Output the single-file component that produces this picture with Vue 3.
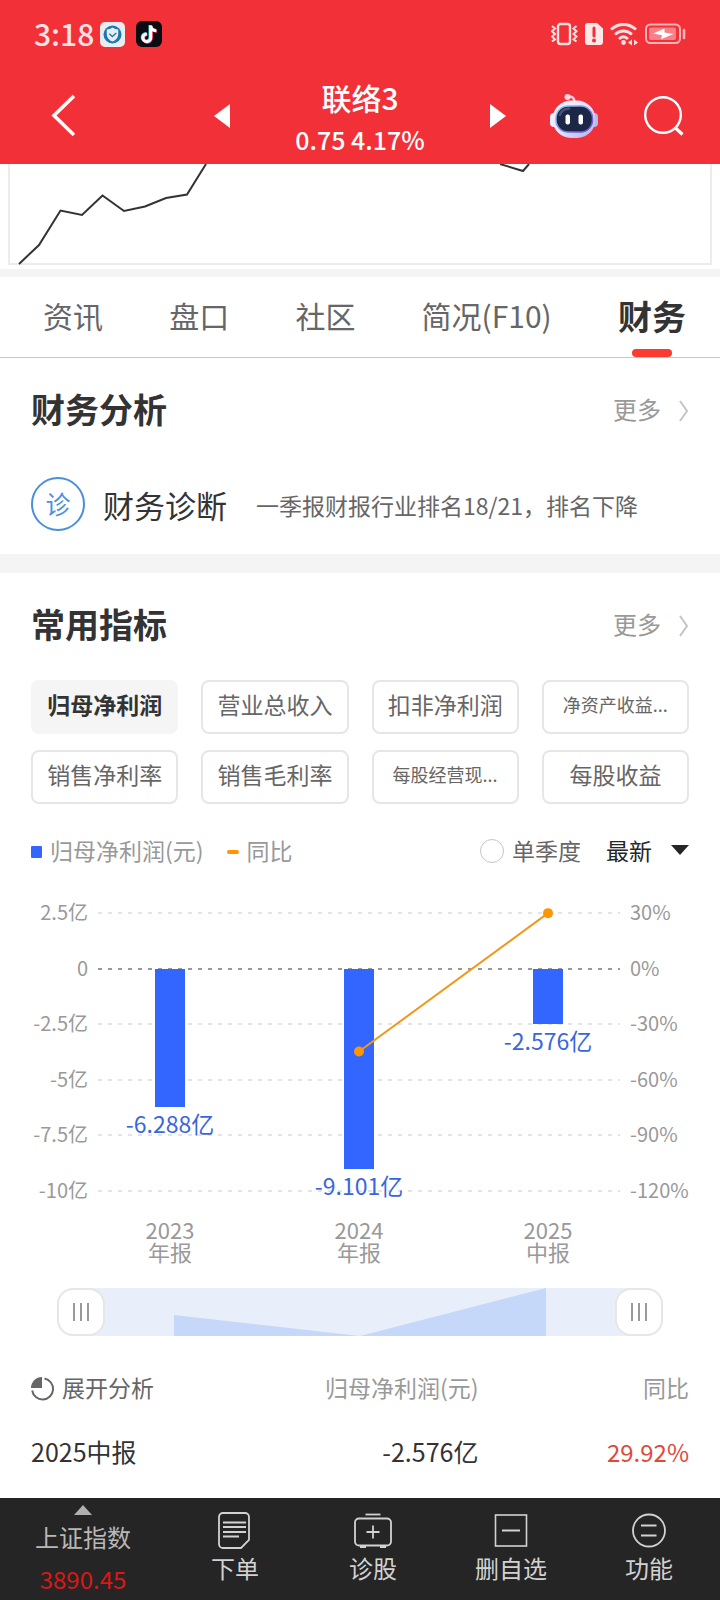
<template>
  <div class="page">
    <header class="header">
      <div class="status">
        <span class="clock">3:18</span>
        <svg class="app-icon" width="25" height="25" viewBox="0 0 25 25">
          <rect width="25" height="25" rx="5" fill="#e9edf0" />
          <circle cx="12.5" cy="12.5" r="9" fill="#1b78b4" />
          <path d="M12.500 5.500c1.800 1.300 3.500 1.900 5.700 2v4.500c0 3.800-2.400 6.300-5.700 7.600-3.300-1.300-5.700-3.800-5.700-7.600V7.500c2.200-.1 3.900-.7 5.700-2z" fill="#e9edf0" />
          <path d="M9.300 11.800l3 2.800 4-3.600" fill="none" stroke="#1b78b4" stroke-width="1.3" />
        </svg>
        <svg class="app-icon app-icon--tok" width="26" height="26" viewBox="0 0 26 26">
          <rect width="26" height="26" rx="6" fill="#0b0b14" />
          <g fill="none" stroke-width="3">
            <path d="M14 4v12.300a3.900 3.900 0 1 1-3.900-3.900M14 4.500c.4 2.900 2.500 4.600 5.600 4.800" stroke="#35e0e0" />
            <path d="M15.400 5v12.300a3.900 3.900 0 1 1-3.900-3.900M15.400 5.500c.4 2.900 2.500 4.600 5.600 4.800" stroke="#f2375f" />
            <path d="M14.700 4.500v12.300a3.900 3.900 0 1 1-3.900-3.900M14.700 5c.4 2.900 2.500 4.600 5.600 4.800" stroke="#fff" />
          </g>
        </svg>
        <div class="status-right">
          <svg width="27" height="24" viewBox="0 0 27 24" fill="none" stroke="#ffdfe0">
            <rect x="7" y="2" width="12" height="20" rx="2.5" stroke-width="2.4" />
            <path d="M1 4l3 2.500-3 2.700 3 2.700-3 2.700 3 2.700-3 2.200M25.500 4l-3 2.500 3 2.700-3 2.700 3 2.700-3 2.700 3 2.200" stroke-width="2" />
          </svg>
          <svg width="18" height="24" viewBox="0 0 18 24">
            <path d="M3 1h9l6 5.500V20a3 3 0 0 1-3 3H3a3 3 0 0 1-3-3V4a3 3 0 0 1 3-3z" fill="#ffe6e7" />
            <path d="M9 6v8" stroke="#f03038" stroke-width="3" stroke-linecap="round" />
            <circle cx="9" cy="18.500" r="2" fill="#f03038" />
          </svg>
          <svg width="28" height="24" viewBox="0 0 28 24" fill="none" stroke="#ffdfe0" stroke-width="2.800">
            <path d="M1 7.500C8.500.8 18.500.8 26 7.500M5 12.500c5-4.700 12-4.700 17 0M9 17c2.800-2.800 6-2.800 9 0" />
            <circle cx="13.500" cy="20.500" r="2.400" fill="#ffdfe0" stroke="none" />
            <path d="M22 17.500v6l-4-3zM24 17.500v6l4-3z" fill="#ffdfe0" stroke="none" />
          </svg>
          <svg width="41" height="22" viewBox="0 0 41 22">
            <rect x="1" y="1.500" width="34" height="18.500" rx="4.500" fill="none" stroke="#ffb3b6" stroke-width="2" />
            <rect x="4" y="4.500" width="27" height="12.500" rx="2" fill="#f98086" />
            <path d="M19.500 5.500L8 10.500l9 1.800-1 4L28.500 11l-9-1.500z" fill="#fff" />
            <path d="M39 7v8" stroke="#ffb3b6" stroke-width="2.600" stroke-linecap="round" />
          </svg>
        </div>
      </div>

      <div class="nav">
        <button class="icon-btn nav-back" aria-label="返回">
          <svg width="26" height="44" viewBox="0 0 26 44" fill="none" stroke="#fff" stroke-width="3.600">
            <path d="M23 2L3 21.500l20 19.500" />
          </svg>
        </button>
        <div class="nav-stock">
          <button class="icon-btn" aria-label="上一只">
            <svg width="16" height="24" viewBox="0 0 16 24"><path d="M16 0v24L0 12z" fill="#fff" /></svg>
          </button>
          <h1 class="stock">
            <span class="stock-name">联络3</span>
            <span class="stock-quote">0.75 4.17%</span>
          </h1>
          <button class="icon-btn" aria-label="下一只">
            <svg width="16" height="24" viewBox="0 0 16 24"><path d="M0 0v24l16-12z" fill="#fff" /></svg>
          </button>
        </div>
        <div class="nav-actions">
          <button class="icon-btn" aria-label="智能助手">
            <svg width="48" height="46" viewBox="0 0 48 46">
              <defs>
                <linearGradient id="robotShell" x1="0" y1="0" x2="1" y2="1">
                  <stop offset="0" stop-color="#fff0f8" />
                  <stop offset=".5" stop-color="#e7e2fb" />
                  <stop offset="1" stop-color="#aeb0f0" />
                </linearGradient>
                <linearGradient id="robotRim" x1="0" y1="0" x2="1" y2="1">
                  <stop offset="0" stop-color="#8fd8ee" />
                  <stop offset="1" stop-color="#6a3fd6" />
                </linearGradient>
              </defs>
              <path d="M17 4c4-1.500 7.500.5 7.500 5" fill="none" stroke="#f6c9dd" stroke-width="2.400" />
              <circle cx="17.500" cy="4" r="3" fill="#fbd9e7" />
              <rect x="0" y="20" width="8" height="14" rx="4" fill="#eef0ff" />
              <rect x="40" y="20" width="8" height="14" rx="4" fill="#b5b7f2" />
              <rect x="2.500" y="7.500" width="43" height="37.500" rx="18.500" fill="url(#robotShell)" />
              <rect x="6" y="13" width="36.500" height="26" rx="12" fill="#1c2746" stroke="url(#robotRim)" stroke-width="1.500" />
              <path d="M10 22c1-4 4-6 9-6.500" fill="none" stroke="#47507a" stroke-width="2.500" stroke-linecap="round" />
              <rect x="15.500" y="21.500" width="4.500" height="10" rx="2" fill="#fff" />
              <rect x="28.500" y="21.500" width="4.500" height="10" rx="2" fill="#fff" />
            </svg>
          </button>
          <button class="icon-btn" aria-label="搜索">
            <svg width="40" height="40" viewBox="0 0 40 40" fill="none" stroke="#fff" stroke-width="2.400">
              <circle cx="19" cy="19" r="17.800" />
              <path d="M31.500 32l7 6.500" stroke-width="3.200" />
            </svg>
          </button>
        </div>
      </div>
    </header>

    <svg class="trend" viewBox="0 0 720 105">
      <path d="M9 0V100H711V0" fill="none" stroke="#ececec" stroke-width="2" />
      <path
        d="M19 100L39 81L60.500 46.500L82 51L102.500 31.500L124 47L145 42.500L166 34L187 30.500L206 0M500 0L523 7L529 0"
        fill="none" stroke="#333" stroke-width="2"
      />
    </svg>

    <nav class="tabs">
      <button v-for="t in tabs" :key="t" class="tab" :class="{ 'tab--active': t === activeTab }" @click="activeTab = t">
        {{ t }}
      </button>
    </nav>

    <main class="main">
      <section class="section">
        <div class="section-head">
          <h2>财务分析</h2>
          <a href="#" class="more">更多
            <svg class="more-arrow" width="10" height="22" viewBox="0 0 10 22"><path d="M1 1l7 10-7 10" fill="none" stroke="#c4c4c4" stroke-width="2" /></svg>
          </a>
        </div>
        <div class="diagnosis">
          <span class="diagnosis-badge">诊</span>
          <span class="diagnosis-title">财务诊断</span>
          <span class="diagnosis-text">一季报财报行业排名18/21，排名下降</span>
        </div>
      </section>

      <section class="section section--metrics">
        <div class="section-head">
          <h2>常用指标</h2>
          <a href="#" class="more">更多
            <svg class="more-arrow" width="10" height="22" viewBox="0 0 10 22"><path d="M1 1l7 10-7 10" fill="none" stroke="#c4c4c4" stroke-width="2" /></svg>
          </a>
        </div>

        <div class="chips">
          <button
            v-for="m in metrics" :key="m" class="chip"
            :class="{ 'chip--active': m === activeMetric, 'chip--small': m.endsWith('...') }"
            @click="activeMetric = m"
          >{{ m }}</button>
        </div>

        <div class="legend">
          <span class="legend-bar"></span>
          <span class="legend-name">归母净利润(元)</span>
          <span class="legend-line"></span>
          <span class="legend-name">同比</span>
          <label class="quarter">
            <input v-model="singleQuarter" type="checkbox" />
            单季度
          </label>
          <div class="period">
            <select v-model="period" aria-label="报告期">
              <option>最新</option>
              <option>年报</option>
              <option>中报</option>
            </select>
            <svg class="period-arrow" width="18" height="10" viewBox="0 0 18 10"><path d="M0 0h18L9 10z" fill="#262626" /></svg>
          </div>
        </div>

        <svg class="chart" viewBox="0 0 658 404">
          <g v-for="(r, i) in rows" :key="r.left">
            <line x1="67" x2="589" :y1="rowY(i)" :y2="rowY(i)" class="grid" :class="{ 'grid--zero': i === 1 }" />
            <text x="57" :y="rowY(i) + 7" text-anchor="end" class="axis">{{ r.left }}</text>
            <text x="599" :y="rowY(i) + 7" class="axis">{{ r.right }}</text>
          </g>
          <g v-for="(b, i) in bars" :key="b.year">
            <rect :x="barX(i) - 15" :y="rowY(1)" width="30" :height="barHeight(b.value)" fill="#3366ff" />
            <text :x="barX(i)" :y="rowY(1) + barHeight(b.value) + 26" text-anchor="middle" class="bar-value">{{ b.value }}亿</text>
            <text text-anchor="middle" class="year">
              <tspan :x="barX(i)" y="363">{{ b.year }}</tspan>
              <tspan :x="barX(i)" y="385">{{ b.report }}</tspan>
            </text>
          </g>
          <polyline :points="linePoints" fill="none" stroke="#f0981c" stroke-width="2" />
          <circle v-for="p in growth" :key="p.index" :cx="barX(p.index)" :cy="growthY(p.value)" r="5" fill="#ff9500" />
        </svg>

        <div class="zoom">
          <svg class="zoom-track" viewBox="0 0 558 48" preserveAspectRatio="none">
            <rect width="558" height="48" fill="#e8effb" />
            <path d="M93 48V27L279 48L465 0V48z" fill="#c5d8f9" />
          </svg>
          <input v-model="zoomStart" type="range" min="0" max="100" aria-label="起始" />
          <input v-model="zoomEnd" type="range" min="0" max="100" aria-label="结束" />
        </div>

        <table class="table">
          <thead>
            <tr>
              <th>
                <button class="expand">
                  <svg class="expand-icon" width="24" height="24" viewBox="0 0 24 24">
                    <path d="M11 11V0A11 11 0 0 0 0 11z" fill="#666" />
                    <path d="M13.500 1.600A10.500 10.500 0 1 1 1.200 13.500" fill="none" stroke="#666" stroke-width="2" />
                  </svg>
                  展开分析
                </button>
              </th>
              <th class="num">归母净利润(元)</th>
              <th class="num">同比</th>
            </tr>
          </thead>
          <tbody>
            <tr>
              <td>2025中报</td>
              <td class="num">-2.576亿</td>
              <td class="num rise">29.92%</td>
            </tr>
          </tbody>
        </table>
      </section>
    </main>

    <footer class="toolbar">
      <button class="index">
        <svg width="18" height="10" viewBox="0 0 18 10"><path d="M9 0l9 10H0z" fill="#b0b0b0" /></svg>
        <span class="index-name">上证指数</span>
        <span class="index-value">3890.45</span>
      </button>
      <button class="tool">
        <svg width="36" height="38" viewBox="0 0 36 38" fill="none" stroke="#d2d2d2" stroke-width="1.800">
          <path d="M6 2h22a4 4 0 0 1 4 4v23l-8 8H6a4 4 0 0 1-4-4V6a4 4 0 0 1 4-4z" />
          <path d="M6 11.500h23M6 16h23M6 21h23M6 25.500h16" />
        </svg>
        下单
      </button>
      <button class="tool">
        <svg width="40" height="38" viewBox="0 0 40 38" fill="none" stroke="#d2d2d2" stroke-width="1.800">
          <path d="M12.500 3.500h15" />
          <rect x="2" y="7.500" width="36" height="27" rx="4" />
          <path d="M20 14.500v13M13.500 21h13" />
          <path d="M7 35.800h6M27 35.800h6" stroke-width="2.400" />
        </svg>
        诊股
      </button>
      <button class="tool">
        <svg width="36" height="38" viewBox="0 0 36 38" fill="none" stroke="#d2d2d2" stroke-width="1.600">
          <rect x="2.500" y="4" width="31" height="31" />
          <path d="M9 19.500h18" stroke-width="2" />
        </svg>
        删自选
      </button>
      <button class="tool">
        <svg width="36" height="38" viewBox="0 0 36 38" fill="none" stroke="#d2d2d2" stroke-width="1.800">
          <circle cx="18" cy="19.500" r="16" />
          <path d="M10 14.500h15.500M10 24.500h15.500" />
        </svg>
        功能
      </button>
    </footer>
  </div>
</template>

<script setup>
import { ref } from 'vue';

const tabs = ['资讯', '盘口', '社区', '简况(F10)', '财务'];
const activeTab = ref('财务');

const metrics = [
  '归母净利润', '营业总收入', '扣非净利润', '净资产收益...',
  '销售净利率', '销售毛利率', '每股经营现...', '每股收益',
];
const activeMetric = ref('归母净利润');

const singleQuarter = ref(false);
const period = ref('最新');
const zoomStart = ref(0);
const zoomEnd = ref(100);

const rows = [
  { left: '2.5亿', right: '30%' },
  { left: '0', right: '0%' },
  { left: '-2.5亿', right: '-30%' },
  { left: '-5亿', right: '-60%' },
  { left: '-7.5亿', right: '-90%' },
  { left: '-10亿', right: '-120%' },
];

const bars = [
  { year: '2023', report: '年报', value: -6.288 },
  { year: '2024', report: '年报', value: -9.101 },
  { year: '2025', report: '中报', value: -2.576 },
];

const growth = [
  { index: 1, value: -44.73 },
  { index: 2, value: 29.92 },
];

// one grid step is 2.5亿 on the left axis and 30% on the right one
const TOP = 37;
const STEP = 55.6;

const rowY = (i) => Math.round(TOP + i * STEP);
const barX = (i) => 139 + i * 189;
const barHeight = (value) => Math.round((-value / 2.5) * STEP) - 2;
const growthY = (value) => TOP + STEP - (value / 30) * STEP;

const linePoints = growth.map((p) => `${barX(p.index)},${growthY(p.value)}`).join(' ');
</script>

<style>
body {
  background: #fff;
}
</style>

<style scoped>
.page {
  min-height: 100vh;
  display: flex;
  flex-direction: column;
  background: #fff;
  color: #333;
  font-family: "Noto Sans CJK SC", sans-serif;
}

button {
  padding: 0;
  border: none;
  background: none;
  font: inherit;
  color: inherit;
  cursor: pointer;
}

svg { display: block; }

/* header */
.header {
  background: #f23038;
  color: #fff;
}

.status {
  display: flex;
  align-items: center;
  height: 68px;
  padding: 0 34px;
}
.clock {
  padding-bottom: 2px;
  font-size: 30px;
  font-weight: 500;
  line-height: 40px;
  color: #ffe3e4;
}
.app-icon { margin-left: 6px; }
.app-icon--tok { margin-left: 11px; }
.status-right {
  display: flex;
  align-items: center;
  gap: 7px;
  margin-left: auto;
}

.nav {
  display: grid;
  grid-template-columns: 1fr 292px 1fr;
  align-items: center;
  height: 96px;
}
.icon-btn { display: block; }
.nav-back { justify-self: start; margin-left: 51px; }
.nav-stock {
  display: flex;
  align-items: center;
  justify-content: space-between;
}
.stock {
  display: flex;
  flex-direction: column;
  align-items: center;
  margin: 0;
  padding-top: 4px;
  font-weight: 500;
  line-height: 42px;
}
.stock-name { font-size: 30px; }
.stock-quote { font-size: 25px; }
.nav-actions {
  display: flex;
  align-items: center;
  justify-content: flex-end;
  gap: 46px;
  padding-right: 36px;
}

.trend {
  width: 100%;
  height: auto;
}

/* tabs */
.tabs {
  display: flex;
  align-items: center;
  justify-content: space-between;
  height: 80px;
  padding: 0 34px 0 43px;
  border-top: 8px solid #f4f4f4;
  border-bottom: 1px solid #c8c8c8;
}
.tab {
  position: relative;
  height: 80px;
  padding-bottom: 4px;
  font-size: 30px;
  color: #666;
}
.tab--active {
  font-size: 34px;
  font-weight: 700;
  color: #333;
}
.tab--active::after {
  content: "";
  position: absolute;
  left: 50%;
  bottom: 0;
  width: 40px;
  height: 8px;
  margin-left: -20px;
  border-radius: 4px;
  background: #fb3a30;
}

/* sections */
.main { flex: 1; }
.section { padding: 0 31px 8px; }
.section--metrics {
  padding-bottom: 12px;
  border-top: 19px solid #f4f4f4;
}
.section-head {
  box-sizing: border-box;
  display: flex;
  align-items: center;
  justify-content: space-between;
  height: 104px;
  padding-bottom: 3px;
}
.section-head h2 {
  margin: 0;
  font-size: 34px;
  font-weight: 700;
}
.more {
  display: flex;
  align-items: center;
  gap: 18px;
  font-size: 24px;
  color: #999;
  text-decoration: none;
}
.more-arrow { margin-top: 4px; }

.diagnosis {
  display: flex;
  align-items: center;
  height: 84px;
}
.diagnosis-badge {
  box-sizing: border-box;
  width: 54px;
  height: 54px;
  border: 2px solid #4a90d9;
  border-radius: 50%;
  font-size: 25px;
  line-height: 48px;
  text-align: center;
  color: #4a90e2;
}
.diagnosis-title {
  margin-left: 18px;
  font-size: 31px;
}
.diagnosis-text {
  margin-left: 29px;
  padding-top: 2px;
  font-size: 23px;
  color: #666;
}

.chips {
  display: grid;
  grid-template-columns: repeat(4, 1fr);
  gap: 16px 23px;
  padding-top: 3px;
}
.chip {
  height: 54px;
  padding-bottom: 6px;
  border: 2px solid #e6e6e6;
  border-radius: 8px;
  font-size: 23px;
  white-space: nowrap;
  color: #666;
}
.chip--small { font-size: 18px; }
.chip--active {
  border-color: #f5f5f5;
  background: #f5f5f5;
  font-weight: 700;
  color: #333;
}

.legend {
  display: flex;
  align-items: center;
  height: 50px;
  margin-top: 21px;
  font-size: 23px;
  color: #999;
}
.legend-bar {
  width: 11px;
  height: 12px;
  margin-top: 3px;
  border-radius: 1px;
  background: #3366ff;
}
.legend-line {
  width: 12px;
  height: 4px;
  margin-top: 3px;
  margin-left: 23px;
  border-radius: 2px;
  background: #ff9500;
}
.legend-name { margin-left: 8px; }
.quarter {
  display: flex;
  align-items: center;
  gap: 8px;
  margin-left: auto;
  color: #666;
}
.quarter input {
  appearance: none;
  width: 24px;
  height: 24px;
  margin: 2px 0 0;
  border: 1px solid #c4c4c4;
  border-radius: 50%;
}
.quarter input:checked { background: #3366ff; }
.period {
  position: relative;
  margin-left: 25px;
}
.period select {
  appearance: none;
  display: block;
  width: 83px;
  padding: 0;
  border: none;
  background: none;
  font: inherit;
  color: #262626;
}
.period-arrow {
  position: absolute;
  right: 0;
  top: 50%;
  margin-top: -5px;
  pointer-events: none;
}

/* chart */
.chart {
  width: 100%;
  height: auto;
  margin-top: 1px;
}
.grid {
  stroke: #e4e4e4;
  stroke-width: 2;
  stroke-dasharray: 4 6;
}
.grid--zero { stroke: #999; }
.axis {
  font-size: 20px;
  fill: #999;
}
.bar-value {
  font-size: 23px;
  fill: #3a66dd;
}
.year {
  font-size: 22px;
  fill: #999;
}

.zoom {
  position: relative;
  height: 48px;
  margin: 8px 26px 0;
}
.zoom-track {
  box-sizing: border-box;
  width: 100%;
  height: 48px;
  padding: 0 24px;
}
.zoom input {
  appearance: none;
  position: absolute;
  inset: 0;
  width: 100%;
  height: 48px;
  margin: 0;
  background: none;
  pointer-events: none;
}
.zoom input::-webkit-slider-thumb {
  appearance: none;
  box-sizing: border-box;
  width: 48px;
  height: 48px;
  border: 2px solid #e6e6e6;
  border-radius: 16px;
  background:
    linear-gradient(#999, #999) 14px 13px / 2px 18px no-repeat,
    linear-gradient(#999, #999) 21px 13px / 2px 18px no-repeat,
    linear-gradient(#999, #999) 28px 13px / 2px 18px no-repeat,
    #fff;
  pointer-events: auto;
}

/* table */
.table {
  width: 100%;
  margin-top: 19px;
  border-collapse: collapse;
  table-layout: fixed;
  font-size: 25px;
}
.table th,
.table td {
  height: 64px;
  padding: 0;
  text-align: left;
}
.table th {
  font-size: 23px;
  font-weight: 400;
  color: #999;
}
.table th:first-child { width: 34%; }
.table th:nth-child(2) { width: 34%; }
.table .num { text-align: right; }
.table .rise {
  font-size: 24px;
  color: #e0483e;
}
.expand {
  display: flex;
  align-items: center;
  gap: 7px;
  color: #666;
}
.expand-icon { margin-top: 4px; }

/* toolbar */
.toolbar {
  position: sticky;
  bottom: 0;
  display: flex;
  height: 102px;
  padding-right: 2px;
  background: #252525;
  font-size: 24px;
  color: #d2d2d2;
}
.index {
  display: flex;
  flex-direction: column;
  align-items: center;
  gap: 1px;
  width: 166px;
  padding-top: 7px;
  line-height: 41px;
}
.index-name { color: #b8b8b8; }
.index-value { color: #d81818; }
.tool {
  flex: 1;
  display: flex;
  flex-direction: column;
  align-items: center;
  padding-top: 13px;
  line-height: 38px;
}
</style>
